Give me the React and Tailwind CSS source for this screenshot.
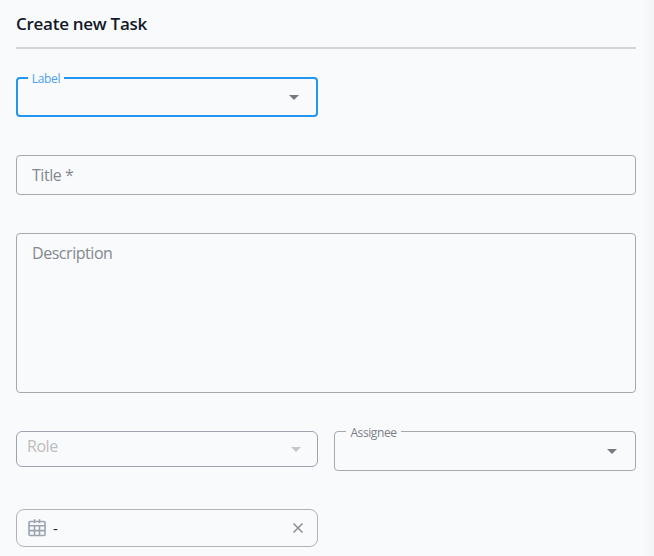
import { useState } from 'react';

const Caret = ({ className }) => (
  <svg className={className} width="10" height="5" viewBox="0 0 10 5" fill="currentColor">
    <path d="M0 0h10L5 5z" />
  </svg>
);

const CalendarIcon = () => (
  <svg width="18" height="18" viewBox="0 0 18 18" fill="none" stroke="currentColor" strokeWidth="1.6">
    <rect x="1" y="2.5" width="16" height="14" rx="1.2" />
    <path d="M1 6.8h16M1 11.6h16M6.5 6.8v10M11.5 6.8v10M6.5 0.3v4M11.5 0.3v4" />
  </svg>
);

const CloseIcon = () => (
  <svg width="10" height="10" viewBox="0 0 10 10" fill="none" stroke="currentColor" strokeWidth="1.5">
    <path d="M0.5 0.5l9 9M9.5 0.5l-9 9" />
  </svg>
);

const App = () => {
  const [title, setTitle] = useState('');
  const [description, setDescription] = useState('');

  return (
    <div className="flex h-[556px] w-[654px] overflow-hidden bg-[#f9fafc] font-['Open_Sans','Noto_Sans',sans-serif]">
      <div className="w-[641px] shrink-0 pl-4 pr-[5px]">
        {/* Header */}
        <div className="h-[49px] border-b-2 border-[#d3d4d8] pt-3">
          <h2 className="text-[17px] font-semibold leading-6 tracking-[-0.27px] text-[#111827]">
            Create new Task
          </h2>
        </div>

        <form className="mt-7 flex flex-col" onSubmit={(e) => e.preventDefault()}>
          <button
            type="button"
            className="relative flex h-10 w-[302px] items-center justify-end rounded border-2 border-[#2196f3] pr-[17px]"
          >
            <span className="absolute -top-[2px] left-[10px] flex h-[2px] w-9 items-center justify-center bg-[#f9fafc] text-[12px] tracking-[-0.35px] text-[#4b9ff0]">
              <span className="relative top-px">Label</span>
            </span>
            <Caret className="text-[#757981]" />
          </button>

          <input
            className="mt-[38px] h-10 w-[620px] rounded border border-[#a5a8af] px-[15px] text-[16px] tracking-[-0.45px] text-gray-800 outline-none placeholder:text-[#85888f]"
            placeholder="Title *"
            value={title}
            onChange={(e) => setTitle(e.target.value)}
          />

          <textarea
            className="mt-[38px] h-40 w-[620px] resize-none rounded border border-[#a5a8af] px-[15px] py-[7px] text-[16px] leading-6 tracking-[-0.45px] text-gray-800 outline-none placeholder:text-[#85888f]"
            placeholder="Description"
            value={description}
            onChange={(e) => setDescription(e.target.value)}
          />

          <div className="mt-[38px] flex w-[620px] items-start gap-4">
            <button
              type="button"
              disabled
              className="flex h-9 w-[302px] justify-between rounded-md border border-[#9ca3af] pl-[10px] pr-4"
            >
              <span className="mt-[2px] text-[16px] leading-6 tracking-[-0.45px] text-[#bdbdbd]">Role</span>
              <Caret className="mt-[15px] text-[#c6c7c9]" />
            </button>
            <button
              type="button"
              className="relative flex h-10 w-[302px] items-center justify-end rounded border border-[#a5a8af] pr-[18px]"
            >
              <span className="absolute -top-px left-[11px] flex h-px w-[55px] items-center justify-center bg-[#f9fafc] text-[12px] tracking-[-0.4px] text-[#7b7f87]">
                <span className="relative top-px">Assignee</span>
              </span>
              <Caret className="text-[#757981]" />
            </button>
          </div>

          {/* Date range */}
          <div className="mt-[38px] flex h-[38px] w-[302px] items-center rounded-lg border border-[#b1b3b8] pl-[11px] pr-[14px]">
            <span className="text-[#9ca3af]">
              <CalendarIcon />
            </span>
            <span className="ml-[7px] flex-1 text-[15px] text-[#1f2937]">-</span>
            <button type="button" className="text-[#8b8d91]">
              <CloseIcon />
            </button>
          </div>
        </form>
      </div>

      {/* Shadow along the panel edge */}
      <div className="h-full flex-1 bg-gradient-to-r from-[#f9fafc] to-[#f3f4f6]" />
    </div>
  );
};

export default App;
